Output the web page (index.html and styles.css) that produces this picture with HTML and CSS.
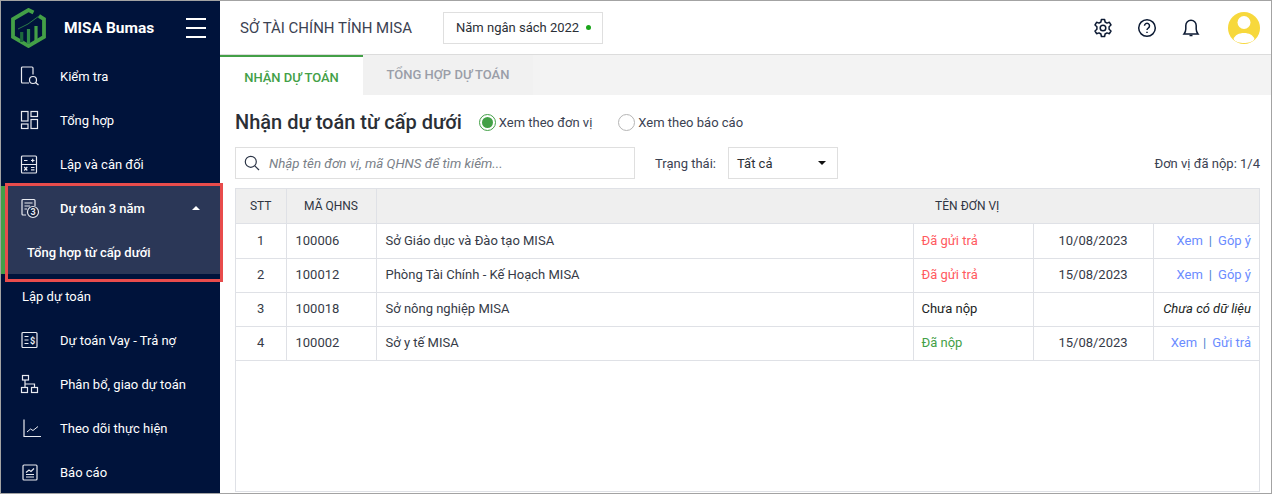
FILE: index.html
```html
<!DOCTYPE html>
<html lang="vi">
<head>
    <meta charset="UTF-8">
    <title>MISA Bumas</title>
    <link rel="stylesheet" href="styles.css">
</head>
<body>
<div class="app">
    <aside class="sidebar">
        <div class="brand">
            <svg class="logo" width="36" height="40" viewBox="0 0 36 40">
                <path d="M22.500 4.500 17.500 2 2 11V29L17.500 38 33 29V11L28 8" fill="none" stroke="#43a047" stroke-width="3.800"/>
                <path d="M10.700 34V24" stroke="#1c6a3c" stroke-width="3.200"/>
                <path d="M17.500 36V21" stroke="#2f8a47" stroke-width="3.200"/>
                <path d="M25 34V18" stroke="#43a047" stroke-width="3.200"/>
                <path d="M7 21 17 16 28 8" fill="none" stroke="#2a7a48" stroke-width="1"/>
            </svg>
            <span class="brand-name">MISA Bumas</span>
            <div class="burger"><i></i><i></i><i></i></div>
        </div>
        <nav>
            <a class="nav-item">
                <svg class="ico" viewBox="0 0 20 20"><path d="M9 17H2.500A1 1 0 0 1 1.500 16V2A1 1 0 0 1 2.500 1H12A1 1 0 0 1 13 2V8.500"/><circle cx="13" cy="14" r="3.500"/><path d="M15.500 16.500 18.500 19"/></svg>
                <span>Kiểm tra</span>
            </a>
            <a class="nav-item">
                <svg class="ico" viewBox="0 0 20 20"><rect x="1.500" y="1.500" width="6.500" height="9.500"/><rect x="11" y="1.500" width="6.500" height="5"/><rect x="1.500" y="14" width="6.500" height="4.500"/><rect x="11" y="9.500" width="6.500" height="9"/></svg>
                <span>Tổng hợp</span>
            </a>
            <a class="nav-item">
                <svg class="ico" viewBox="0 0 20 20"><rect x="1.500" y="2" width="15" height="17" rx="1"/><path d="M1.500 10.500H16.500M4 6.500H7.500M11 6.500H14.500M12.700 4.700V8.300M4.200 13 7.300 16.500M7.300 13 4.200 16.500M11 13.500H14.500M11 15.800H14.500"/></svg>
                <span>Lập và cân đối</span>
            </a>
            <div class="nav-group">
                <a class="nav-item group-head">
                    <svg class="ico" viewBox="0 0 20 20"><path d="M6 17H3A1 1 0 0 1 2 16V2.500A1 1 0 0 1 3 1.500H14A1 1 0 0 1 15 2.500V8"/><path d="M4.500 5H12.500M4.500 8H10M4.500 11H7"/><circle class="ico-disc" cx="13" cy="14" r="5.500"/><text class="ico-num" x="13" y="17.200" text-anchor="middle">3</text></svg>
                    <span>Dự toán 3 năm</span>
                    <b class="caret-up"></b>
                </a>
                <a class="sub-item">Tổng hợp từ cấp dưới</a>
            </div>
            <a class="nav-item plain">Lập dự toán</a>
            <a class="nav-item">
                <svg class="ico" viewBox="0 0 20 20"><rect x="2" y="2.500" width="15" height="15" rx="1"/><path d="M4.500 6.500H8.500M4.500 10H8.500M4.500 13.500H8.500"/><text class="ico-num" x="12.500" y="14" text-anchor="middle">$</text></svg>
                <span>Dự toán Vay - Trả nợ</span>
            </a>
            <a class="nav-item">
                <svg class="ico" viewBox="0 0 20 20"><rect x="2.500" y="1.500" width="6" height="4.500"/><rect x="1.500" y="13.500" width="6" height="5"/><rect x="11.500" y="13.500" width="6" height="5"/><path d="M5 6V10H14.500V13.500M5 10V13.500"/></svg>
                <span>Phân bổ, giao dự toán</span>
            </a>
            <a class="nav-item">
                <svg class="ico" viewBox="0 0 20 20"><path d="M4 1.500V18.500H21"/><path d="M7 14 10.500 11 13 12.500 18 8.500" stroke-width="1"/></svg>
                <span>Theo dõi thực hiện</span>
            </a>
            <a class="nav-item">
                <svg class="ico" viewBox="0 0 20 20"><rect x="3" y="3" width="14" height="15" rx="1"/><path d="M6 10.500 9 8 11 9.500 14 6.500M6 12.500H14M6 15H14"/></svg>
                <span>Báo cáo</span>
            </a>
        </nav>
    </aside>

    <main class="main">
        <header class="topbar">
            <span class="org-name">SỞ TÀI CHÍNH TỈNH MISA</span>
            <div class="year-box">Năm ngân sách 2022<i class="dot"></i></div>
            <div class="top-icons">
                <svg class="top-ico" viewBox="0 0 20 20"><circle cx="10" cy="10" r="2.800"/><path d="M8.400 1.500H11.600L12.100 4 14 5.100 16.400 4.300 18 7 16.100 8.700V11.300L18 13 16.400 15.700 14 14.900 12.100 16 11.600 18.500H8.400L7.900 16 6 14.900 3.600 15.700 2 13 3.900 11.300V8.700L2 7 3.600 4.300 6 5.100 7.900 4Z" stroke-linejoin="round"/></svg>
                <svg class="top-ico" viewBox="0 0 20 20"><circle cx="10" cy="10" r="8.300"/><path d="M7.500 7.800A2.500 2.500 0 1 1 11.300 10C10.400 10.600 10 11 10 12"/><path d="M10 13.700V15"/></svg>
                <svg class="top-ico" viewBox="0 0 20 20"><path d="M3 16H17C15.800 14.500 15.200 13.500 15.200 11V7.500A5.200 5.200 0 0 0 4.800 7.500V11C4.800 13.500 4.200 14.500 3 16Z"/><path d="M8.500 17.500H11.500"/></svg>
                <svg class="avatar" width="32" height="32" viewBox="0 0 32 32"><circle cx="16" cy="16" r="16" fill="#f7d83c"/><circle cx="16" cy="10.500" r="6.500" fill="#fff"/><path d="M5.500 27C7 23 11 21 16 21S25 23 26.500 27C25 30 20 31 16 31S7 30 5.500 27Z" fill="#fff"/></svg>
            </div>
        </header>

        <div class="tabs">
            <a class="tab active">NHẬN DỰ TOÁN</a>
            <a class="tab">TỔNG HỢP DỰ TOÁN</a>
        </div>

        <section class="content">
            <div class="title-row">
                <h1>Nhận dự toán từ cấp dưới</h1>
                <label class="radio checked"><i></i>Xem theo đơn vị</label>
                <label class="radio"><i></i>Xem theo báo cáo</label>
            </div>
            <div class="filter-row">
                <div class="search">
                    <svg width="16" height="16" viewBox="0 0 16 16"><circle cx="6.800" cy="6.800" r="5.500"/><path d="M10.800 10.800 15 15"/></svg>
                    <span>Nhập tên đơn vị, mã QHNS để tìm kiếm...</span>
                </div>
                <span class="filter-label">Trạng thái:</span>
                <div class="select">Tất cả<b class="caret-down"></b></div>
                <span class="submitted">Đơn vị đã nộp: 1/4</span>
            </div>
            <div class="table-wrap">
                <table>
                    <colgroup>
                        <col class="c-stt"><col class="c-code"><col class="c-name"><col class="c-status"><col class="c-date"><col>
                    </colgroup>
                    <thead>
                        <tr>
                            <th>STT</th>
                            <th>MÃ QHNS</th>
                            <th colspan="4" class="th-unit">TÊN ĐƠN VỊ</th>
                        </tr>
                    </thead>
                    <tbody>
                        <tr class="first-row">
                            <td class="center">1</td><td class="pad">100006</td><td class="pad">Sở Giáo dục và Đào tạo MISA</td>
                            <td class="red">Đã gửi trả</td><td class="center">10/08/2023</td>
                            <td class="actions"><a>Xem</a><em>|</em><a>Góp ý</a></td>
                        </tr>
                        <tr>
                            <td class="center">2</td><td class="pad">100012</td><td class="pad">Phòng Tài Chính - Kế Hoạch MISA</td>
                            <td class="red">Đã gửi trả</td><td class="center">15/08/2023</td>
                            <td class="actions"><a>Xem</a><em>|</em><a>Góp ý</a></td>
                        </tr>
                        <tr>
                            <td class="center">3</td><td class="pad">100018</td><td class="pad">Sở nông nghiệp MISA</td>
                            <td class="black">Chưa nộp</td><td></td>
                            <td class="actions nodata">Chưa có dữ liệu</td>
                        </tr>
                        <tr>
                            <td class="center">4</td><td class="pad">100002</td><td class="pad">Sở y tế MISA</td>
                            <td class="green">Đã nộp</td><td class="center">15/08/2023</td>
                            <td class="actions"><a>Xem</a><em>|</em><a>Gửi trả</a></td>
                        </tr>
                    </tbody>
                </table>
            </div>
        </section>
    </main>
    <div class="highlight"></div>
</div>
</body>
</html>
```

FILE: styles.css
```css
* {
    box-sizing: border-box;
}
html, body {
    height: 100%;
}
body {
    margin: 0;
    font-family: Roboto, "Liberation Sans", sans-serif;
    font-size: 13px;
    color: #2b2f36;
    overflow: hidden;
}
.app {
    position: relative;
    display: flex;
    width: 1272px;
    height: 494px;
    border: 1px solid #a3a3a3;
    background-color: white;
}

/* sidebar */
.sidebar {
    width: 219px;
    flex: none;
    background-color: #00133b;
    color: white;
}
.brand {
    display: flex;
    align-items: center;
    height: 53px;
    padding-left: 10px;
}
.logo {
    flex: none;
}
.brand-name {
    margin-left: 17px;
    font-size: 15.500px;
    font-weight: 700;
}
.burger {
    margin-left: auto;
    margin-right: 14px;
    display: flex;
    flex-direction: column;
    gap: 7px;
}
.burger i {
    display: block;
    width: 20px;
    height: 2px;
    background-color: white;
}
.nav-item {
    display: flex;
    align-items: center;
    height: 44px;
    padding-left: 19px;
    font-weight: 400;
}
.nav-item span {
    margin-left: 20px;
}
.nav-item.plain {
    padding-left: 21px;
}
.ico {
    width: 20px;
    height: 20px;
    flex: none;
    fill: none;
    stroke: #e8eaf0;
    stroke-width: 1.200;
    overflow: visible;
}
.ico-disc {
    fill: #16223f;
}
.ico-num {
    font-size: 9px;
    font-weight: 700;
    fill: #e8eaf0;
    stroke: none;
}
.nav-group {
    background-color: #2b3757;
    border-left: 4px solid #43a047;
    height: 88px;
}
.group-head {
    padding-left: 15px;
    font-weight: 500;
}
.caret-up {
    margin-left: 47px;
    border-left: 4px solid transparent;
    border-right: 4px solid transparent;
    border-bottom: 4px solid white;
}
.sub-item {
    display: flex;
    align-items: center;
    height: 44px;
    padding-left: 22px;
    font-weight: 500;
}

/* top bar */
.main {
    flex: 1;
    min-width: 0;
    display: flex;
    flex-direction: column;
}
.topbar {
    display: flex;
    align-items: center;
    height: 54px;
    flex: none;
    padding-left: 20px;
    border-bottom: 1px solid #dcdcdc;
}
.org-name {
    font-size: 15px;
    color: #3b4252;
}
.year-box {
    display: flex;
    align-items: center;
    flex: none;
    width: 160px;
    height: 32px;
    margin-left: 31px;
    padding: 0 0 0 12px;
    border: 1px solid #dfdfdf;
    color: #2b2f36;
    white-space: nowrap;
}
.dot {
    width: 5px;
    height: 5px;
    margin-left: 7px;
    border-radius: 50%;
    background-color: #1aa51a;
}
.top-icons {
    margin-left: auto;
    margin-right: 11px;
    display: flex;
    align-items: center;
}
.top-ico {
    width: 20px;
    height: 20px;
    margin-right: 24px;
    fill: none;
    stroke: #0c1a33;
    stroke-width: 1.500;
}
.avatar {
    margin-left: 3px;
}

/* tabs */
.tabs {
    display: flex;
    height: 40px;
    flex: none;
    background-color: #f3f3f3;
}
.tab {
    display: flex;
    align-items: center;
    justify-content: center;
    width: 170px;
    height: 40px;
    padding-bottom: 2px;
    font-weight: 500;
    color: #9a9ea8;
    background-color: #f1f1f1;
}
.tab.active {
    width: 143px;
    padding: 3px 0 0;
    color: #43a047;
    background-color: white;
    border-top: 2px solid #43a047;
}

/* content */
.content {
    flex: 1;
    min-height: 0;
    display: flex;
    flex-direction: column;
    padding: 0 11px 0 15px;
}
.title-row {
    display: flex;
    align-items: center;
    height: 52px;
    padding-top: 2px;
    flex: none;
}
h1 {
    margin: 0 17px 0 0;
    font-size: 20px;
    font-weight: 500;
    color: #2b2f36;
}
.radio {
    display: flex;
    align-items: center;
    margin-right: 26px;
    color: #3b4252;
}
.radio i {
    width: 17px;
    height: 17px;
    margin-right: 3px;
    border: 1px solid #b5b5b5;
    border-radius: 50%;
    background-clip: content-box;
    padding: 2px;
}
.radio.checked i {
    border-color: #43a047;
    background-color: #43a047;
}
.filter-row {
    display: flex;
    align-items: center;
    height: 32px;
    flex: none;
}
.search {
    display: flex;
    align-items: center;
    width: 400px;
    height: 32px;
    padding-left: 8px;
    border: 1px solid #dfdfdf;
    font-size: 13.300px;
    font-style: italic;
    color: #7a7f88;
}
.search svg {
    margin-right: 9px;
    fill: none;
    stroke: #2b3446;
    stroke-width: 1.200;
}
.filter-label {
    margin-left: 20px;
    color: #3b4252;
}
.select {
    display: flex;
    align-items: center;
    justify-content: space-between;
    width: 110px;
    height: 32px;
    margin-left: 12px;
    padding: 0 11px 0 8px;
    border: 1px solid #dfdfdf;
}
.caret-down {
    border-left: 4px solid transparent;
    border-right: 4px solid transparent;
    border-top: 4px solid #111;
}
.submitted {
    margin-left: auto;
    color: #3b4252;
}

/* table */
.table-wrap {
    flex: 1;
    min-height: 0;
    margin-top: 9px;
    margin-bottom: 1px;
    border: 1px solid #dfe1e6;
}
table {
    width: 100%;
    border-collapse: collapse;
    table-layout: fixed;
}
.c-stt { width: 50px; }
.c-code { width: 90px; }
.c-name { width: 537px; }
.c-status { width: 120px; }
.c-date { width: 120px; }
th {
    height: 34px;
    padding: 0;
    font-size: 12px;
    font-weight: 400;
    color: #2f3542;
    background-color: #efefef;
    border-right: 1px solid #dfe1e6;
    border-bottom: 1px solid #dfe1e6;
}
th:last-child {
    border-right: none;
}
.th-unit {
    padding-left: 299px;
}
td {
    height: 34px;
    padding: 0 8px 2px;
    color: #363b47;
    border-right: 1px solid #dfe1e6;
    border-bottom: 1px solid #dfe1e6;
}
td:last-child {
    border-right: none;
}
td.pad {
    padding-left: 9px;
}
.first-row td {
    height: 35px;
    padding-bottom: 0;
}
.center {
    text-align: center;
}
td.red { color: #ff5a5f; }
td.black { color: #1c1f24; }
td.green { color: #43a047; }
.actions {
    text-align: right;
}
.actions a {
    color: #6b8cff;
}
.actions em {
    margin: 0 6px;
    font-style: normal;
    color: #4a7fd0;
}
td.nodata {
    font-style: italic;
    color: #1c1f24;
}

/* red frame drawn on top of the screenshot */
.highlight {
    position: absolute;
    left: 4px;
    top: 182px;
    width: 218px;
    height: 99px;
    border: 3px solid #e84c4c;
    pointer-events: none;
}
```
